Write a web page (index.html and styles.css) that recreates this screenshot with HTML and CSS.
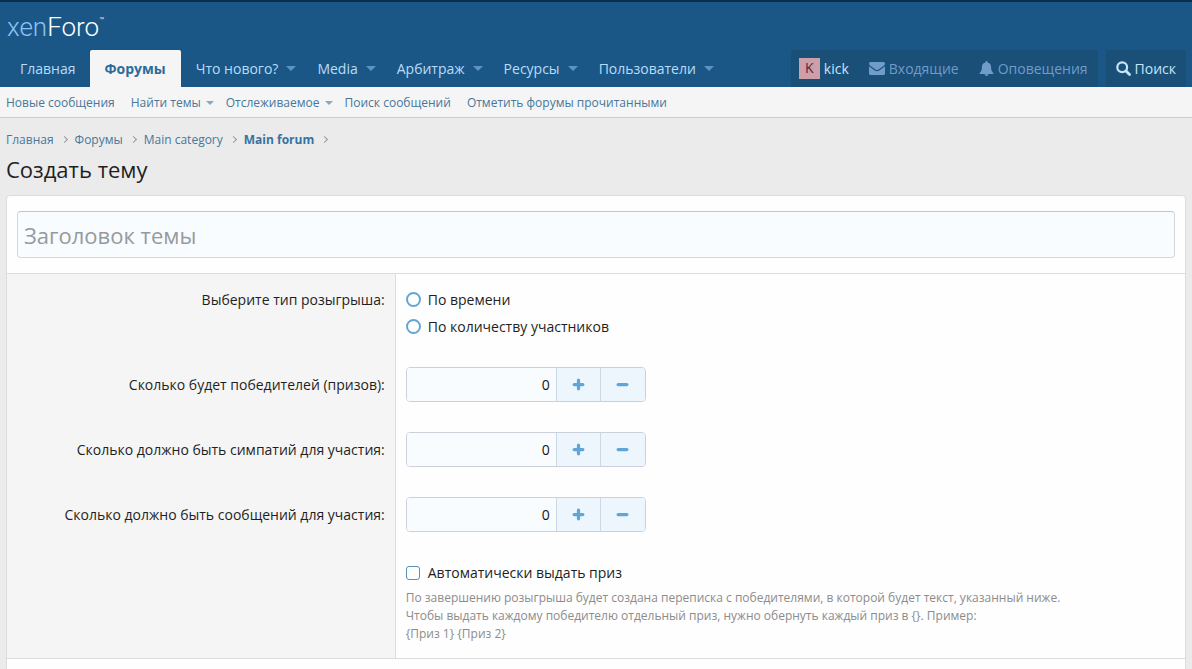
FILE: index.html
```html
<!DOCTYPE html>
<html lang="ru">
<head>
<meta charset="utf-8">
<meta name="viewport" content="width=device-width, initial-scale=1">
<title>Создать тему</title>
<link rel="stylesheet" href="styles.css">
</head>
<body>
<header class="header">
  <a class="logo" href="#"><span class="logo-light">xen</span>Foro<span class="logo-mark">™</span></a>
</header>
<nav class="nav">
  <ul class="nav-list">
    <li><a class="tab" href="#">Главная</a></li>
    <li><a class="tab tab-active" href="#">Форумы</a></li>
    <li><a class="tab" href="#">Что нового?<span class="caret"></span></a></li>
    <li><a class="tab" href="#">Media<span class="caret"></span></a></li>
    <li><a class="tab" href="#">Арбитраж<span class="caret"></span></a></li>
    <li><a class="tab" href="#">Ресурсы<span class="caret"></span></a></li>
    <li><a class="tab" href="#">Пользователи<span class="caret"></span></a></li>
  </ul>
  <div class="tools">
    <div class="tool-group">
      <a class="tool tool-user" href="#"><span class="avatar">K</span>kick</a>
      <a class="tool tool-muted" href="#"><svg width="16" height="13" viewBox="0 0 16 13" fill="currentColor" aria-hidden="true"><path d="M1.500 0h13A1.500 1.500 0 0 1 16 1.500C16 3 14.500 4 13.500 4.700L9.500 7.500C8.500 8.200 7.500 8.200 6.500 7.500L2.500 4.700C1.500 4 0 3 0 1.500A1.500 1.500 0 0 1 1.500 0z"/><path d="M0 4.200C1.500 5.500 4 7 5.800 8.400c1.400 1 3 1 4.400 0C12 7 14.500 5.500 16 4.200v7.300a1.500 1.500 0 0 1-1.500 1.500h-13A1.500 1.500 0 0 1 0 11.500z"/></svg>Входящие</a>
      <a class="tool tool-muted" href="#"><svg width="15" height="15" viewBox="0 0 15 15" fill="currentColor" aria-hidden="true"><path d="M7.500 0c.6 0 1 .4 1 1v.6c2.300.4 3.600 2.200 3.600 4.400 0 3 .7 4.800 2.400 6.200 0 .5-.4.900-1 .9H1.500c-.6 0-1-.4-1-.9C2.200 10.800 2.900 9 2.900 6c0-2.200 1.300-4 3.600-4.400V1c0-.6.4-1 1-1z"/><path d="M5.500 13.200h4a2 1.800 0 0 1-4 0z"/></svg>Оповещения</a>
    </div>
    <div class="tool-group">
      <a class="tool tool-search" href="#"><svg width="15" height="15" viewBox="0 0 15 15" fill="none" stroke="currentColor" stroke-linecap="round" aria-hidden="true"><circle cx="6.200" cy="6.200" r="4.900" stroke-width="2.200"/><path d="M10 10l3.500 3.500" stroke-width="2.800"/></svg>Поиск</a>
    </div>
  </div>
</nav>
<nav class="subnav">
  <a href="#">Новые сообщения</a>
  <a href="#">Найти темы<span class="caret caret-small"></span></a>
  <a href="#">Отслеживаемое<span class="caret caret-small"></span></a>
  <a href="#">Поиск сообщений</a>
  <a href="#">Отметить форумы прочитанными</a>
</nav>
<main class="page">
  <nav class="crumbs">
    <a href="#">Главная</a><span class="chevron"></span>
    <a href="#">Форумы</a><span class="chevron"></span>
    <a href="#">Main category</a><span class="chevron"></span>
    <a class="crumb-current" href="#">Main forum</a><span class="chevron"></span>
  </nav>
  <h1 class="title">Создать тему</h1>
  <form class="card">
    <div class="title-row">
      <input class="title-input" type="text" placeholder="Заголовок темы" aria-label="Заголовок темы">
    </div>
    <div class="row" role="radiogroup" aria-labelledby="type-label">
      <div class="term" id="type-label">Выберите тип розыгрыша:</div>
      <div class="field choices">
        <label class="choice"><input class="radio" type="radio" name="type">По времени</label>
        <label class="choice"><input class="radio" type="radio" name="type">По количеству участников</label>
      </div>
    </div>
    <div class="row">
      <label class="term term-input" for="winners">Сколько будет победителей (призов):</label>
      <div class="field"><div class="stepper">
        <input class="number" id="winners" type="text" inputmode="numeric" value="0">
        <button class="step" type="button" aria-label="Увеличить"><svg class="glyph" viewBox="0 0 12 12" aria-hidden="true"><path d="M6 2v8M2 6h8"/></svg></button>
        <button class="step" type="button" aria-label="Уменьшить"><svg class="glyph" viewBox="0 0 12 12" aria-hidden="true"><path d="M2 6h8"/></svg></button>
      </div></div>
    </div>
    <div class="row">
      <label class="term term-input" for="likes">Сколько должно быть симпатий для участия:</label>
      <div class="field"><div class="stepper">
        <input class="number" id="likes" type="text" inputmode="numeric" value="0">
        <button class="step" type="button" aria-label="Увеличить"><svg class="glyph" viewBox="0 0 12 12" aria-hidden="true"><path d="M6 2v8M2 6h8"/></svg></button>
        <button class="step" type="button" aria-label="Уменьшить"><svg class="glyph" viewBox="0 0 12 12" aria-hidden="true"><path d="M2 6h8"/></svg></button>
      </div></div>
    </div>
    <div class="row">
      <label class="term term-input" for="posts">Сколько должно быть сообщений для участия:</label>
      <div class="field"><div class="stepper">
        <input class="number" id="posts" type="text" inputmode="numeric" value="0">
        <button class="step" type="button" aria-label="Увеличить"><svg class="glyph" viewBox="0 0 12 12" aria-hidden="true"><path d="M6 2v8M2 6h8"/></svg></button>
        <button class="step" type="button" aria-label="Уменьшить"><svg class="glyph" viewBox="0 0 12 12" aria-hidden="true"><path d="M2 6h8"/></svg></button>
      </div></div>
    </div>
    <div class="row">
      <div class="term"></div>
      <div class="field choices">
        <label class="choice"><input class="check" type="checkbox" aria-describedby="prize-hint">Автоматически выдать приз</label>
        <p class="hint" id="prize-hint">По завершению розыгрыша будет создана переписка с победителями, в которой будет текст, указанный ниже.<br>Чтобы выдать каждому победителю отдельный приз, нужно обернуть каждый приз в {}. Пример:<br>{Приз 1} {Приз 2}</p>
      </div>
    </div>
    <div class="card-end"></div>
  </form>
</main>
</body>
</html>
```
FILE: styles.css
```css
* { box-sizing: border-box; }
body {
  margin: 0;
  background: #ebebeb;
  color: #1f1f1f;
  font: 14px/21px "Open Sans", "Noto Sans", sans-serif;
}
a { color: inherit; text-decoration: none; }
ul { list-style: none; margin: 0; padding: 0; }

.header {
  height: 50px;
  padding: 2px 7px 0;
  display: flex;
  align-items: center;
  background: #1b5786;
  border-top: 2px solid #0a2e4c;
}
.logo {
  display: flex;
  align-items: flex-start;
  color: #fff;
  font: 300 26px/32px Roboto, sans-serif;
}
.logo-light { color: #8cc3f5; }
.logo-mark { font-size: 8px; line-height: 20px; }

.nav {
  display: flex;
  justify-content: space-between;
  padding: 0 6px 0 5px;
  background: #1b5786;
}
.nav-list { display: flex; }
.tab {
  display: flex;
  align-items: center;
  height: 37px;
  padding: 0 6px 0 15px;
  color: #b8dcf8;
}
.tab-active {
  margin-left: 8px;
  padding: 0 15px;
  background: #f5f5f5;
  color: #2b6c9c;
  font-weight: 700;
  border-radius: 2px 2px 0 0;
}
.caret {
  margin-left: 8px;
  border: 5px solid transparent;
  border-top-color: #5d92c8;
  border-bottom: 0;
}
.tools { display: flex; gap: 8px; }
.tool-group { display: flex; background: #1a4f78; }
.tool {
  display: flex;
  align-items: center;
  gap: 4px;
  height: 37px;
  padding: 0 10px;
  color: #c6e4fa;
}
.tool-user { padding-left: 8px; }
.tool-muted { color: #6f9cc8; }
.avatar {
  width: 21px;
  height: 21px;
  background: #cc9fa9;
  color: #602040;
  font-size: 14px;
  line-height: 19px;
  text-align: center;
}

.subnav {
  display: flex;
  gap: 16px;
  height: 31px;
  padding: 1px 6px 0;
  background: #f5f5f5;
  border-bottom: 1px solid #cbcbcb;
  color: #47779b;
  font-size: 12px;
}
.subnav a { display: flex; align-items: center; }
.caret-small { margin: 0 -4px 0 5px; border-width: 4px 4px 0; border-top-color: #84a9cb; }

.page { padding: 10px 6px 0; }
.crumbs {
  display: flex;
  align-items: center;
  gap: 8px;
  height: 22px;
  color: #47779b;
  font-size: 12px;
}
.crumb-current { color: #3473a3; font-weight: 700; }
.chevron {
  width: 5px;
  height: 5px;
  border: solid #999;
  border-width: 1px 1px 0 0;
  transform: rotate(45deg);
}
.title {
  margin: 3px 0 10px;
  font-size: 22px;
  line-height: 32px;
  font-weight: 400;
}

.card {
  background: #fefefe;
  border: 1px solid #dcdcdc;
  border-radius: 4px 4px 0 0;
}
.title-row { padding: 15px 10px; border-bottom: 1px solid #dcdcdc; }
.title-input {
  display: block;
  width: 100%;
  height: 47px;
  padding: 0 6px;
  background: #f8fcff;
  border: 1px solid #d4d8dc;
  border-top-color: #c2c6c9;
  border-radius: 4px;
  color: #141414;
  font: inherit;
  font-size: 22px;
}
.title-input::placeholder { color: #969a9e; opacity: 1; }
.row { display: flex; }
.term {
  width: 33%;
  padding: 15px 10px;
  background: #f5f5f5;
  border-right: 1px solid #dcdcdc;
  text-align: right;
}
.term-input { padding-top: 22px; }
.field { flex: 1; padding: 15px 10px; }
.choices { display: grid; gap: 6px; }
.choice { display: flex; align-items: center; }
.radio, .check {
  appearance: none;
  width: 15px;
  height: 15px;
  margin: 0 7px 0 0;
  border: 2px solid #65a5d2;
  border-radius: 50%;
  background: #fefefe;
}
.check { width: 14px; height: 14px; margin-right: 8px; border-width: 1px; border-radius: 3px; border-color: #5792b8; }
.stepper {
  display: flex;
  width: 240px;
  height: 35px;
  border: 1px solid #cbd0da;
  border-radius: 4px;
  overflow: hidden;
}
.number {
  width: 149px;
  padding: 0 6px;
  border: 0;
  background: #f8fcff;
  color: #141414;
  font: inherit;
  text-align: right;
}
.step {
  flex: 1;
  display: grid;
  place-items: center;
  padding: 0;
  border: 0;
  border-left: 1px solid #cbd9e6;
  background: #edf6fd;
}
.glyph { width: 13px; height: 13px; fill: none; stroke: #5fa6d6; stroke-width: 3; stroke-linecap: round; }
.hint { margin: 0; color: #8c8c8c; font-size: 12px; line-height: 18px; }
.card-end { height: 32px; border-top: 1px solid #dcdcdc; }
```
